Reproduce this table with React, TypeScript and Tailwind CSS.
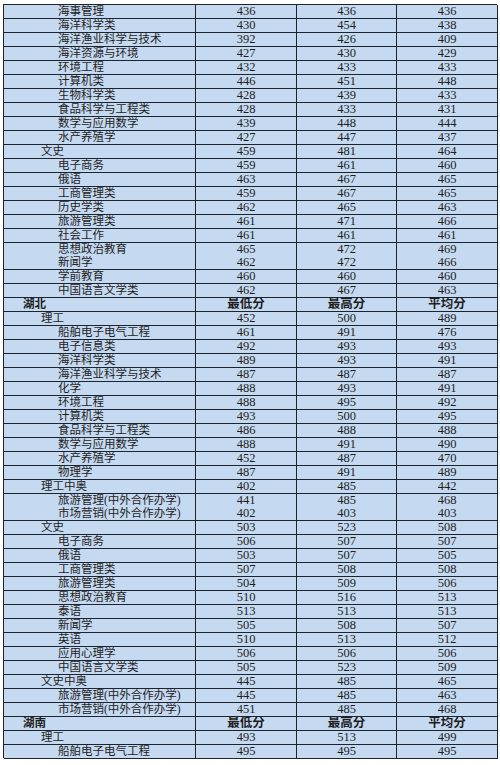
type Row = {
  name: string
  level: 0 | 1 | 2
  min: string
  max: string
  avg: string
}

const r = (name: string, level: 0 | 1 | 2, min: string, max: string, avg: string): Row => ({
  name,
  level,
  min,
  max,
  avg,
})

const rows: Row[] = [
  r('海事管理', 2, '436', '436', '436'),
  r('海洋科学类', 2, '430', '454', '438'),
  r('海洋渔业科学与技术', 2, '392', '426', '409'),
  r('海洋资源与环境', 2, '427', '430', '429'),
  r('环境工程', 2, '432', '433', '433'),
  r('计算机类', 2, '446', '451', '448'),
  r('生物科学类', 2, '428', '439', '433'),
  r('食品科学与工程类', 2, '428', '433', '431'),
  r('数学与应用数学', 2, '439', '448', '444'),
  r('水产养殖学', 2, '427', '447', '437'),
  r('文史', 1, '459', '481', '464'),
  r('电子商务', 2, '459', '461', '460'),
  r('俄语', 2, '463', '467', '465'),
  r('工商管理类', 2, '459', '467', '465'),
  r('历史学类', 2, '462', '465', '463'),
  r('旅游管理类', 2, '461', '471', '466'),
  r('社会工作', 2, '461', '461', '461'),
  r('思想政治教育', 2, '465', '472', '469'),
  r('新闻学', 2, '462', '472', '466'),
  r('学前教育', 2, '460', '460', '460'),
  r('中国语言文学类', 2, '462', '467', '463'),
  r('湖北', 0, '最低分', '最高分', '平均分'),
  r('理工', 1, '452', '500', '489'),
  r('船舶电子电气工程', 2, '461', '491', '476'),
  r('电子信息类', 2, '492', '493', '493'),
  r('海洋科学类', 2, '489', '493', '491'),
  r('海洋渔业科学与技术', 2, '487', '487', '487'),
  r('化学', 2, '488', '493', '491'),
  r('环境工程', 2, '488', '495', '492'),
  r('计算机类', 2, '493', '500', '495'),
  r('食品科学与工程类', 2, '486', '488', '488'),
  r('数学与应用数学', 2, '488', '491', '490'),
  r('水产养殖学', 2, '452', '487', '470'),
  r('物理学', 2, '487', '491', '489'),
  r('理工中奥', 1, '402', '485', '442'),
  r('旅游管理(中外合作办学)', 2, '441', '485', '468'),
  r('市场营销(中外合作办学)', 2, '402', '403', '403'),
  r('文史', 1, '503', '523', '508'),
  r('电子商务', 2, '506', '507', '507'),
  r('俄语', 2, '503', '507', '505'),
  r('工商管理类', 2, '507', '508', '508'),
  r('旅游管理类', 2, '504', '509', '506'),
  r('思想政治教育', 2, '510', '516', '513'),
  r('泰语', 2, '513', '513', '513'),
  r('新闻学', 2, '505', '508', '507'),
  r('英语', 2, '510', '513', '512'),
  r('应用心理学', 2, '506', '506', '506'),
  r('中国语言文学类', 2, '505', '523', '509'),
  r('文史中奥', 1, '445', '485', '465'),
  r('旅游管理(中外合作办学)', 2, '445', '485', '463'),
  r('市场营销(中外合作办学)', 2, '451', '485', '468'),
  r('湖南', 0, '最低分', '最高分', '平均分'),
  r('理工', 1, '493', '513', '499'),
  r('船舶电子电气工程', 2, '495', '495', '495'),
]

const indent = ['pl-[19px]', 'pl-[37px]', 'pl-[54px]']

export default function App() {
  return (
    <div className="w-[500px] h-[765px] bg-white pt-[4px] pl-[3px] font-['Liberation_Serif','Noto_Sans_CJK_SC',serif] text-[#1e1e1e]">
      <div className="w-[494px] border-t border-l border-[#1c2430]">
        {rows.map((row, i) => {
          const head = row.level === 0
          // 54 rows over ~753px: every 18th row is a pixel shorter
          const h = i % 18 === 17 ? 'h-[13px]' : 'h-[14px]'
          return (
            <div
              key={i}
              className={`grid grid-cols-[192px_101px_100px_101px] leading-[13px] ${h} ${head ? 'font-bold' : ''}`}
            >
              <div
                className={`bg-[#c5d9f0] border-r border-b border-[#1c2430] text-[11.5px] whitespace-nowrap overflow-hidden ${indent[row.level]}`}
              >
                {row.name}
              </div>
              <div className="bg-[#c5d9f0] border-r border-b border-[#1c2430] text-center text-[12.5px]">{row.min}</div>
              <div className="bg-[#c5d9f0] border-r border-b border-[#1c2430] text-center text-[12.5px]">{row.max}</div>
              <div className="bg-[#c5d9f0] border-r border-b border-[#1c2430] text-center text-[12.5px]">{row.avg}</div>
            </div>
          )
        })}
      </div>
    </div>
  )
}
